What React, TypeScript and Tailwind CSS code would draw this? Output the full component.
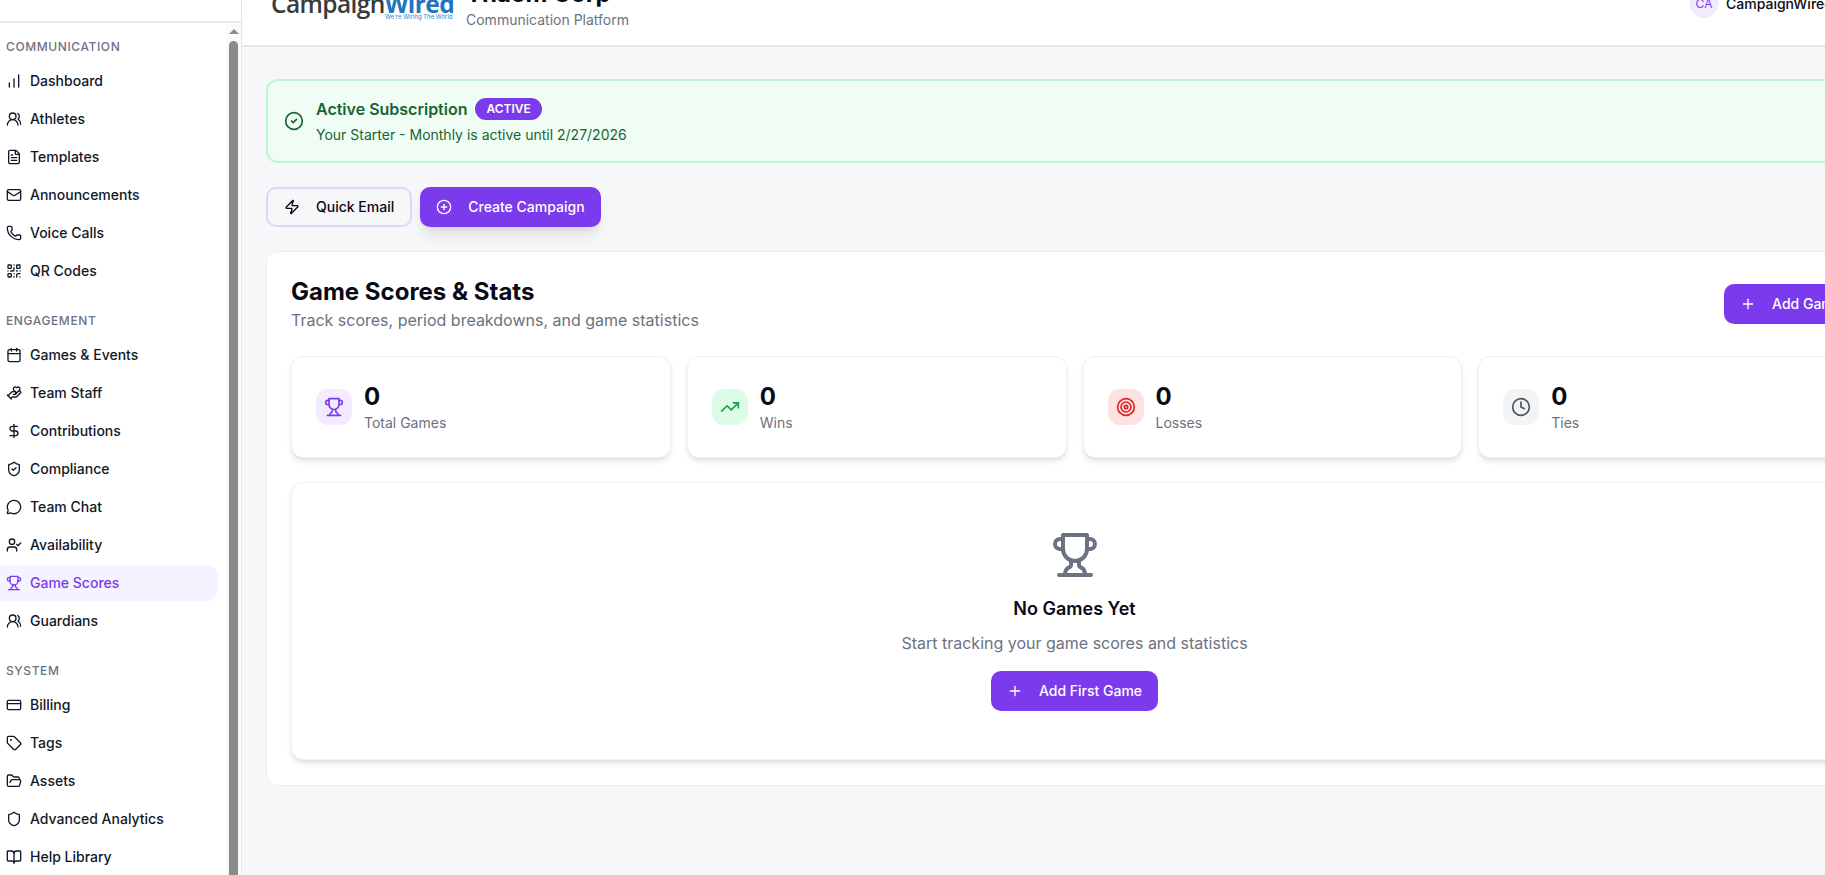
import {
  BookOpen,
  Calendar,
  ChartNoAxesColumnIncreasing,
  CircleCheck,
  CirclePlus,
  Clock,
  CreditCard,
  DollarSign,
  FileText,
  FolderOpen,
  HandHeart,
  Mail,
  MessageCircle,
  Phone,
  Plus,
  QrCode,
  Shield,
  ShieldCheck,
  Tag,
  Target,
  TrendingUp,
  UserCheck,
  UsersRound,
  Zap,
} from 'lucide-react'

// the older lucide trophy, flat topped cup with flared legs
function Trophy({ className }: { className?: string }) {
  return (
    <svg
      viewBox="0 0 24 24"
      fill="none"
      stroke="currentColor"
      strokeWidth="2"
      strokeLinecap="round"
      strokeLinejoin="round"
      className={className}
    >
      <path d="M6 9H4.5a2.5 2.5 0 0 1 0-5H6" />
      <path d="M18 9h1.5a2.5 2.5 0 0 0 0-5H18" />
      <path d="M4 22h16" />
      <path d="M10 14.66V17c0 .55-.47.98-.97 1.21C7.85 18.75 7 20.24 7 22" />
      <path d="M14 14.66V17c0 .55.47.98.97 1.21C16.15 18.75 17 20.24 17 22" />
      <path d="M18 2H6v7a6 6 0 0 0 12 0V2Z" />
    </svg>
  )
}

const navSections = [
  {
    title: 'Communication',
    items: [
      { label: 'Dashboard', icon: ChartNoAxesColumnIncreasing },
      { label: 'Athletes', icon: UsersRound },
      { label: 'Templates', icon: FileText },
      { label: 'Announcements', icon: Mail },
      { label: 'Voice Calls', icon: Phone },
      { label: 'QR Codes', icon: QrCode },
    ],
  },
  {
    title: 'Engagement',
    items: [
      { label: 'Games & Events', icon: Calendar },
      { label: 'Team Staff', icon: HandHeart },
      { label: 'Contributions', icon: DollarSign },
      { label: 'Compliance', icon: ShieldCheck },
      { label: 'Team Chat', icon: MessageCircle },
      { label: 'Availability', icon: UserCheck },
      { label: 'Game Scores', icon: Trophy, active: true },
      { label: 'Guardians', icon: UsersRound },
    ],
  },
  {
    title: 'System',
    items: [
      { label: 'Billing', icon: CreditCard },
      { label: 'Tags', icon: Tag },
      { label: 'Assets', icon: FolderOpen },
      { label: 'Advanced Analytics', icon: Shield },
      { label: 'Help Library', icon: BookOpen },
    ],
  },
]

const stats = [
  { label: 'Total Games', icon: Trophy, box: 'bg-[#f3ebff]', color: 'text-[#7c3aed]' },
  { label: 'Wins', icon: TrendingUp, box: 'bg-[#dcfce7]', color: 'text-[#16a34a]' },
  { label: 'Losses', icon: Target, box: 'bg-[#fee2e2]', color: 'text-[#dc2626]' },
  { label: 'Ties', icon: Clock, box: 'bg-[#f3f4f6]', color: 'text-[#4b5563]' },
]

function Sidebar() {
  return (
    <aside className="relative flex h-full w-[242px] shrink-0 flex-col overflow-hidden border-r border-[#e5e7eb] bg-white">
      <div className="h-[23px] shrink-0 border-b-2 border-[#e5e7eb]" />
      <nav className="pr-[23px] pt-[16px]">
        {navSections.map((section) => (
          <div key={section.title} className="mb-[24px]">
            <p className="mb-2 pl-[6px] text-xs font-medium uppercase leading-4 tracking-wider text-[#6b7280]">
              {section.title}
            </p>
            <div className="flex flex-col gap-0.5">
              {section.items.map((item) => {
                const Icon = item.icon
                return (
                  <div
                    key={item.label}
                    className={`flex h-9 items-center gap-2 rounded-r-xl pl-[6px] text-sm font-medium ${
                      item.active ? 'bg-[#f5f3ff] text-[#7c3aed]' : 'text-[#111827]'
                    }`}
                  >
                    <Icon className="h-4 w-4 shrink-0" />
                    {item.label}
                  </div>
                )
              })}
            </div>
          </div>
        ))}
      </nav>

      {/* scrollbar */}
      <div className="absolute bottom-0 right-0 top-[24px] w-[15px] bg-[#fafafa]">
        <div className="mx-auto mt-[5px] h-0 w-0 border-x-[5px] border-b-[5px] border-x-transparent border-b-[#8b8b8b]" />
        <div className="mx-auto mt-[7px] h-[900px] w-[9px] rounded-t-[5px] bg-[#8b8b8b]" />
      </div>
    </aside>
  )
}

function Header() {
  return (
    <header className="flex h-[47px] shrink-0 items-end justify-between overflow-hidden border-b-2 border-[#e3e7ed] bg-white pl-[29px] pr-[24px]">
      <div className="flex items-end">
        <div className="relative w-[195px] pb-[25px]">
          <p className="whitespace-nowrap font-['Open_Sans',sans-serif] text-[24.5px] font-semibold leading-[32px] tracking-[-0.6px] text-[#3a3a3c]">
            Campaign<span className="font-bold text-[#1f75bc]">Wired</span>
          </p>
          <p className="absolute bottom-[24px] left-[114px] whitespace-nowrap font-['Inter',sans-serif] text-[6px] leading-[8px] text-[#2f80c8]">
            We're Wiring The World
          </p>
        </div>
        <div className="pb-[15px]">
          <h1 className="whitespace-nowrap text-2xl font-bold leading-8 text-[#0a0a14]">Thaom Corp</h1>
          <p className="whitespace-nowrap text-sm leading-5 text-[#6b7280]">Communication Platform</p>
        </div>
      </div>
      <div className="flex items-center gap-2 pb-[27px]">
        <div className="flex h-7 w-7 items-center justify-center rounded-full border border-[#e9e5f5] bg-[#f1ecfe] text-xs text-[#7c3aed]">
          CA
        </div>
        <span className="w-[157px] whitespace-nowrap text-sm font-medium text-[#0a0a14]">CampaignWired</span>
      </div>
    </header>
  )
}

function PrimaryButton({ icon: Icon, label, shadow }: { icon: typeof Plus; label: string; shadow?: boolean }) {
  return (
    <button
      className={`flex h-10 items-center gap-4 rounded-[10px] bg-[#7c3aed] px-4 text-sm font-medium text-white ${
        shadow ? 'shadow-lg' : ''
      }`}
    >
      <Icon className="h-4 w-4" />
      {label}
    </button>
  )
}

export default function App() {
  return (
    <div className="flex h-[875px] w-[1825px] overflow-hidden bg-[#f6f7f9] font-['Inter',sans-serif]">
      <Sidebar />
      <main className="flex h-full w-[1665px] shrink-0 flex-col">
        <Header />
        <div className="flex flex-col px-6 pt-8">
          <div className="flex h-[84px] items-center gap-3 rounded-xl border-2 border-[#bbf7d0] bg-[#f0fdf4] pl-[16px]">
            <CircleCheck className="h-5 w-5 shrink-0 text-[#166534]" />
            <div>
              <div className="flex items-center gap-2">
                <span className="font-semibold text-[#166534]">Active Subscription</span>
                <span className="rounded-full bg-[#7c3aed] px-[11px] py-[3px] text-xs font-semibold text-white">ACTIVE</span>
              </div>
              <p className="mt-1 text-sm text-[#166534]">Your Starter - Monthly is active until 2/27/2026</p>
            </div>
          </div>

          <div className="mt-6 flex gap-2">
            <button className="flex h-10 items-center gap-4 rounded-[10px] border-2 border-[#ddd6fe] px-4 text-sm font-medium text-[#0a0a14]">
              <Zap className="h-4 w-4" />
              Quick Email
            </button>
            <PrimaryButton icon={CirclePlus} label="Create Campaign" shadow />
          </div>

          <section className="mt-6 rounded-xl border border-[#eeeff2] bg-white px-6 pb-[25px] pt-6">
            <div className="flex items-center justify-between">
              <div>
                <h2 className="text-2xl font-bold leading-8 text-[#0a0a14]">Game Scores &amp; Stats</h2>
                <p className="leading-6 text-[#6b7280]">Track scores, period breakdowns, and game statistics</p>
              </div>
              <PrimaryButton icon={Plus} label="Add Game" />
            </div>

            <div className="mt-6 grid grid-cols-4 gap-4">
              {stats.map((stat) => {
                const Icon = stat.icon
                return (
                  <div
                    key={stat.label}
                    className="flex items-center gap-3 rounded-xl border border-[#f0f1f3] bg-white p-6 shadow-md"
                  >
                    <div className={`flex h-9 w-9 items-center justify-center rounded-xl ${stat.box}`}>
                      <Icon className={`h-5 w-5 ${stat.color}`} />
                    </div>
                    <div>
                      <p className="text-2xl font-bold leading-8 text-[#0a0a14]">0</p>
                      <p className="text-sm leading-5 text-[#6b7280]">{stat.label}</p>
                    </div>
                  </div>
                )
              })}
            </div>

            <div className="mt-[24px] flex flex-col items-center rounded-xl border border-[#f0f1f3] bg-white p-12 shadow-md">
              <Trophy className="mb-4 h-12 w-12 text-[#6b7280]" />
              <h3 className="mb-2 text-lg font-semibold leading-7 text-[#0a0a14]">No Games Yet</h3>
              <p className="mb-4 leading-6 text-[#6b7280]">Start tracking your game scores and statistics</p>
              <PrimaryButton icon={Plus} label="Add First Game" />
            </div>
          </section>
        </div>
      </main>
    </div>
  )
}
